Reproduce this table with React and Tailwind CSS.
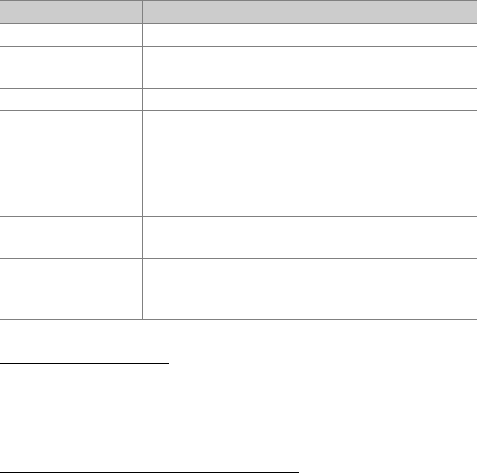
export default function App() {
  const rows = [22, 41, 21, 105, 41, 60];
  return (
    <div className="w-[477px] h-[473px] bg-white relative overflow-hidden">
      <div className="border-t border-[#808080]">
        <div className="flex h-[23px] bg-[#cccccc] border-b border-[#808080]">
          <div className="w-[142px]" />
          <div className="flex-1 border-l border-[#808080]" />
        </div>
        {rows.map((h, i) => (
          <div key={i} className="flex border-b border-[#808080]" style={{ height: h + 1 }}>
            <div className="w-[142px]" />
            <div className="flex-1 border-l border-[#808080]" />
          </div>
        ))}
      </div>
      <div className="mt-[43px] h-px w-[169px] bg-black" />
      <div className="mt-[108px] h-px w-[299px] bg-black" />
    </div>
  );
}
